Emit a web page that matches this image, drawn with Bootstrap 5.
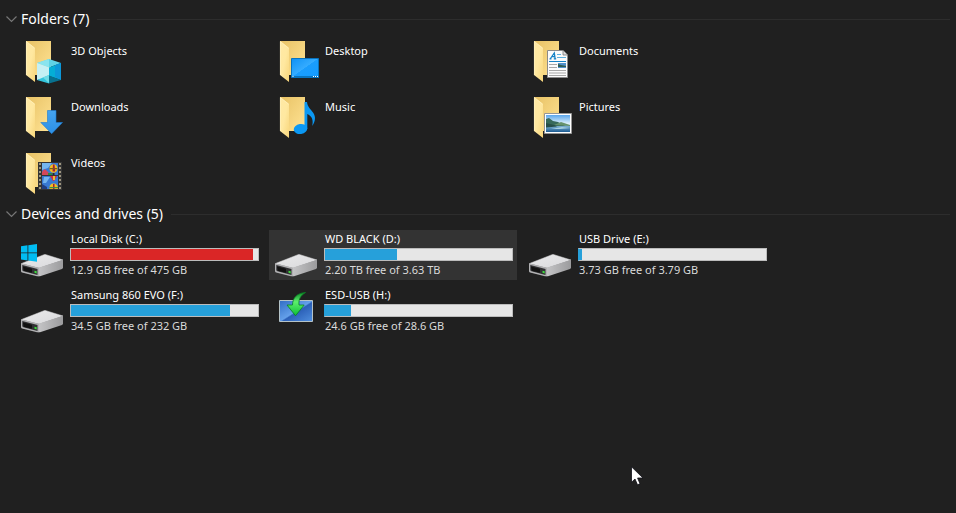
<!DOCTYPE html>
<html lang="en" data-bs-theme="dark">
<head>
<meta charset="utf-8">
<meta name="viewport" content="width=device-width, initial-scale=1">
<title>This PC</title>
<link href="https://cdn.jsdelivr.net/npm/bootstrap@5.3.0/dist/css/bootstrap.min.css" rel="stylesheet">
<style>
  body { background: #202020; color: #fff; font-family: "Noto Sans", "Open Sans", sans-serif; font-size: 11px; line-height: 18px; }
  .explorer { padding: 3px 6px 0; }
  .group-head { height: 32px; gap: 8px; }
  .group-toggle { gap: 4px; font-size: 14px; line-height: 20px; color: #fff; }
  .group-rule { height: 1px; background: #2d2d2d; }
  .tiles { display: grid; grid-template-columns: repeat(auto-fill, 248px); gap: 6px; padding: 0 0 1px 9px; max-width: 780px; }
  .tile { height: 50px; gap: 4px; padding: 1px 4px 0 3px; color: #fff; }
  .tile:hover, .tile.hovered { background: #333; }
  .tile-label { padding: 6px 0 0 1px; }
  .tile-text { padding-left: 1px; }
  .free { color: #dadada; }
  .meter { --bs-progress-height: 13px; --bs-progress-bg: #e6e6e6; --bs-progress-bar-bg: #26a0da; border: 1px solid #bcbcbc; }
  .meter.edge { border-left-color: #26a0da; }
  .meter.full { --bs-progress-bar-bg: #da2626; }
  .name { line-height: 15px; padding-bottom: 2px; }
  .pointer { left: 631px; top: 466px; }
</style>
</head>
<body>
<svg class="position-absolute" width="0" height="0" aria-hidden="true">
  <defs>
    <linearGradient id="gBack" x1="0" y1="0" x2="1" y2="1"><stop offset="0" stop-color="#e8c265"/><stop offset="1" stop-color="#ffe394"/></linearGradient>
    <linearGradient id="gFlap" x1="0" y1="0" x2="1" y2="1"><stop offset="0" stop-color="#ffe9a6"/><stop offset=".5" stop-color="#ffe8a0"/><stop offset="1" stop-color="#f8d67b"/></linearGradient>
    <linearGradient id="gScreen" x1="0" y1="0" x2="1" y2="1"><stop offset="0" stop-color="#0f91f5"/><stop offset=".49" stop-color="#35acff"/><stop offset=".5" stop-color="#1a9dfd"/><stop offset="1" stop-color="#149bff"/></linearGradient>
    <linearGradient id="gTop" x1="0" y1="0" x2="1" y2="1"><stop offset="0" stop-color="#eaeaeb"/><stop offset="1" stop-color="#d9d9dc"/></linearGradient>
    <linearGradient id="gSide" x1="0" y1="0" x2="1" y2="0"><stop offset="0" stop-color="#c4c4c6"/><stop offset="1" stop-color="#9b9b9d"/></linearGradient>
    <linearGradient id="gSky" x1="0" y1="0" x2="0" y2="1"><stop offset="0" stop-color="#5ba7ed"/><stop offset=".5" stop-color="#dceffb"/><stop offset="1" stop-color="#e9f5fb"/></linearGradient>
    <linearGradient id="gSea" x1="0" y1="0" x2="0" y2="1"><stop offset="0" stop-color="#8dbfdc"/><stop offset="1" stop-color="#1b5a91"/></linearGradient>
    <linearGradient id="gUsb" x1="0" y1="0" x2="1" y2="1"><stop offset="0" stop-color="#2f6cc4"/><stop offset=".5" stop-color="#64a0ea"/><stop offset=".54" stop-color="#2b60b8"/><stop offset="1" stop-color="#4f8ede"/></linearGradient>
    <linearGradient id="gGreen" x1="0" y1="0" x2="0" y2="1"><stop offset="0" stop-color="#0e8a27"/><stop offset=".4" stop-color="#5df06c"/><stop offset="1" stop-color="#0bbd36"/></linearGradient>
    <linearGradient id="gDown" x1="0" y1="0" x2="0" y2="1"><stop offset="0" stop-color="#45a3ee"/><stop offset="1" stop-color="#2c90e6"/></linearGradient>
  </defs>
  <symbol id="folder" viewBox="0 0 48 48">
    <path fill="url(#gBack)" d="M8 5h25v34H8z"/>
    <path fill="url(#gFlap)" d="M8 5l9 7v34L8 39z"/>
    <path fill="none" stroke="#fff2c2" stroke-width=".7" d="M8.400 5.500v33.500M8.400 5.500l8.300 6.700"/>
  </symbol>
  <symbol id="drive" viewBox="0 0 48 48">
    <path fill="url(#gTop)" stroke="#dedee0" stroke-width=".5" stroke-linejoin="round" d="M3.500 32.500L26 23.700q1-.5 2 0L45 29 21 37z"/>
    <path fill="url(#gSide)" d="M20.500 36.800L45 28.800V37l-1 1L22 45.300h-1.500z"/>
    <path fill="#b1b1b3" d="M3 32.200l18 4.600V45.300h-2L4 41.500q-1-.5-1-1.500z"/>
    <path fill="#303032" d="M4.300 34l15.200 4v6l-14-3.700q-1.200-.3-1.200-1.300z"/>
    <path fill="#111" d="M5 35.500l9 2.300v4L5.800 39.700z"/>
    <path fill="#3ddb3d" d="M16.500 39.700l2.200.6v2.100l-2.200-.6z"/>
  </symbol>
</svg>

<main class="explorer">
  <section>
    <h2 class="group-head d-flex align-items-center m-0">
      <button class="group-toggle btn fw-normal p-0 border-0 d-flex align-items-center" type="button" data-bs-toggle="collapse" data-bs-target="#folders" aria-expanded="true" aria-controls="folders">
        <svg width="11" height="8" viewBox="0 0 11 8" fill="none" stroke="#777" stroke-width="1.200" aria-hidden="true"><path d="M.5 1.500l5 5 5-5"/></svg>
        <span>Folders (7)</span>
      </button>
      <span class="group-rule flex-grow-1"></span>
    </h2>
    <div id="folders" class="collapse show">
      <div class="tiles">
        <a class="tile d-flex text-decoration-none" href="#objects">
          <svg class="flex-shrink-0" width="48" height="48" viewBox="0 0 48 48" aria-hidden="true"><use href="#folder"/>
            <path fill="#5fd3e6" d="M31 23l12 4-12 4.500-12-4.500z"/><path fill="#8ae4ee" d="M31 23v8.500l-12-4.500z"/>
            <path fill="#c6f0f4" d="M19 27l12 4.500v10L19 44z"/><path fill="#33c5dd" d="M19 44l12-5v8.500z"/>
            <path fill="#05aed6" d="M31 31.500l12-4.500v17l-12-4z"/><path fill="#0c97d8" d="M37 29.200l6-2.200v17l-6-3z"/><path fill="#08718f" d="M31 39.500l12 4.500-12 3.500z"/><path fill="#70dce6" d="M25 41.500l6-2.500v8z"/>
          </svg>
          <span class="tile-label">3D Objects</span>
        </a>
        <a class="tile d-flex text-decoration-none" href="#desktop">
          <svg class="flex-shrink-0" width="48" height="48" viewBox="0 0 48 48" aria-hidden="true"><use href="#folder"/>
            <path fill="url(#gScreen)" stroke="#0873be" d="M19.500 22.500h27v19h-27z"/><path fill="#0873be" d="M20 40h27v2H20z"/>
            <path fill="#fff" d="M20.500 40h1v1h-1zM41 40h1v1h-1zM43 40h1v1h-1zM45 40h1v1h-1z"/>
          </svg>
          <span class="tile-label">Desktop</span>
        </a>
        <a class="tile d-flex text-decoration-none" href="#documents">
          <svg class="flex-shrink-0" width="48" height="48" viewBox="0 0 48 48" aria-hidden="true"><use href="#folder"/>
            <path fill="#fbfbfb" stroke="#8a8a8a" d="M21.500 14.500h15.500l4.500 4.500v22.500h-20z"/><path fill="#ddd" stroke="#777" stroke-width=".8" d="M37 14.500V19h4.500"/>
            <path fill="none" stroke="#1682c6" stroke-width="1.300" d="M23.500 22.800h2M24.500 22.500l3.800-5.500.8 5.500M27.800 22.800h2.400M26 20.700h3"/>
            <path fill="#5fb1de" d="M31 18h4v1h-4zM31 21h9v1h-9z"/><path fill="#1682c6" d="M23 25h17v1H23z"/>
            <path fill="#a8a8a8" d="M23 28h8v1h-8zM23 31h8v1h-8zM23 34h17v1H23zM23 36.500h17v1H23zM23 39h17v1H23z"/>
            <path fill="#5191cc" d="M32 27h8v5h-8z"/><path fill="#315c50" d="M32 28l3 1 5 1v1h-8z"/>
          </svg>
          <span class="tile-label">Documents</span>
        </a>
        <a class="tile d-flex text-decoration-none" href="#downloads">
          <svg class="flex-shrink-0" width="48" height="48" viewBox="0 0 48 48" aria-hidden="true"><use href="#folder"/>
            <path fill="url(#gDown)" stroke="#1c7bd0" stroke-width=".6" d="M29.500 18.500h8.500v12h6.500L33.700 41.700 22.800 30.500h6.700z"/>
          </svg>
          <span class="tile-label">Downloads</span>
        </a>
        <a class="tile d-flex text-decoration-none" href="#music">
          <svg class="flex-shrink-0" width="48" height="48" viewBox="0 0 48 48" aria-hidden="true"><use href="#folder"/>
            <ellipse cx="28.500" cy="37" rx="6.800" ry="5" fill="#0b98f3" transform="rotate(-8 28.500 37)"/>
            <path fill="#0b98f3" d="M32.500 10H35c.5 5 3.500 7 6 10.500 3 4 2.500 9-.8 13.500 1.200-5 .5-9.500-4.900-12V37h-2.800z"/>
          </svg>
          <span class="tile-label">Music</span>
        </a>
        <a class="tile d-flex text-decoration-none" href="#pictures">
          <svg class="flex-shrink-0" width="48" height="48" viewBox="0 0 48 48" aria-hidden="true"><use href="#folder"/>
            <path fill="#fff" stroke="#969696" d="M18.500 21.500h27v20h-27z"/><path fill="url(#gSky)" d="M20 23h24v17H20z"/>
            <path fill="url(#gSea)" d="M20 33h24v7H20z"/><path fill="#37695b" d="M20 27l3-1 4 3 5 1 5 3 3 1H20z"/><path fill="#66926d" d="M28 33l7-3 9 3v1z"/><path fill="#274e48" d="M20 31l8 2 3 1.500-11 1z"/><path fill="#a8d2e4" d="M25 37l11-2 8 1-10 1z"/>
          </svg>
          <span class="tile-label">Pictures</span>
        </a>
        <a class="tile d-flex text-decoration-none" href="#videos">
          <svg class="flex-shrink-0" width="48" height="48" viewBox="0 0 48 48" aria-hidden="true"><use href="#folder"/>
            <path fill="#353535" d="M20 14h24v28H20z"/><path fill="#3879d2" d="M24 15h16v12H24zM24 28h16v13H24z"/>
            <path fill="none" stroke="#b9b094" stroke-width="1.600" stroke-dasharray="2 2" d="M22 15v26M42 15v26"/>
            <path fill="#75b5ee" d="M24 15h10l-4 5-6 2zM26 29h6l-4 6h-3z"/>
            <ellipse cx="35.500" cy="20.500" rx="4" ry="4.300" fill="#f2bd20"/><path fill="#a61e36" d="M35 16.500h1.500l.7 7h-2.700z"/><path fill="#7c5a1c" d="M31.600 20h7.800v1.200h-7.800z"/><path fill="#302b22" d="M34.500 25h2v2h-2z"/>
            <path fill="#d4475a" d="M24 24q2-4 4-2t3 3v2h-7z"/><path fill="#318942" d="M30 25h4v2h-4z"/>
            <path fill="#cc3049" d="M32 28h7l-3 5h-1z"/><path fill="#eebd2d" d="M35 28h2v4h-2z"/>
            <path fill="#f2bd20" d="M31.500 41q-.4-5.500 4-5.500t4.500 5.500z"/><path fill="#a61e36" d="M35 36h1.500v5H35z"/><path fill="#3c8c4c" d="M31.500 39h8.500v1.200h-8.500z"/><path fill="#213f82" d="M24 36l5 3v2h-5z"/>
          </svg>
          <span class="tile-label">Videos</span>
        </a>
      </div>
    </div>
  </section>

  <section>
    <h2 class="group-head d-flex align-items-center m-0">
      <button class="group-toggle btn fw-normal p-0 border-0 d-flex align-items-center" type="button" data-bs-toggle="collapse" data-bs-target="#drives" aria-expanded="true" aria-controls="drives">
        <svg width="11" height="8" viewBox="0 0 11 8" fill="none" stroke="#777" stroke-width="1.200" aria-hidden="true"><path d="M.5 1.500l5 5 5-5"/></svg>
        <span>Devices and drives (5)</span>
      </button>
      <span class="group-rule flex-grow-1"></span>
    </h2>
    <div id="drives" class="collapse show">
      <div class="tiles">
        <a class="tile d-flex text-decoration-none" href="#c">
          <svg class="flex-shrink-0" width="48" height="48" viewBox="0 0 48 48" aria-hidden="true"><use href="#drive"/>
            <path fill="#00bcf2" d="M3 15.200l6.500-.9v7.200H3zM10.300 14.200l8.700-1.200v8.500h-8.700zM3 22.300h6.500v7.200l-6.500-.9zM10.300 22.300H19v8.500l-8.700-1.200z"/>
          </svg>
          <span class="flex-grow-1">
            <span class="tile-text name d-block">Local Disk (C:)</span>
            <span class="meter full progress rounded-0" role="progressbar" aria-label="Local Disk (C:) used space" aria-valuenow="97" aria-valuemin="0" aria-valuemax="100"><span class="progress-bar" style="width:97.300%"></span></span>
            <span class="tile-text free d-block">12.9 GB free of 475 GB</span>
          </span>
        </a>
        <a class="tile hovered d-flex text-decoration-none" href="#d">
          <svg class="flex-shrink-0" width="48" height="48" viewBox="0 0 48 48" aria-hidden="true"><use href="#drive"/></svg>
          <span class="flex-grow-1">
            <span class="tile-text name d-block">WD BLACK (D:)</span>
            <span class="meter progress rounded-0" role="progressbar" aria-label="WD BLACK (D:) used space" aria-valuenow="39" aria-valuemin="0" aria-valuemax="100"><span class="progress-bar" style="width:38.500%"></span></span>
            <span class="tile-text free d-block">2.20 TB free of 3.63 TB</span>
          </span>
        </a>
        <a class="tile d-flex text-decoration-none" href="#e">
          <svg class="flex-shrink-0" width="48" height="48" viewBox="0 0 48 48" aria-hidden="true"><use href="#drive"/></svg>
          <span class="flex-grow-1">
            <span class="tile-text name d-block">USB Drive (E:)</span>
            <span class="meter edge progress rounded-0" role="progressbar" aria-label="USB Drive (E:) used space" aria-valuenow="2" aria-valuemin="0" aria-valuemax="100"><span class="progress-bar" style="width:1.600%"></span></span>
            <span class="tile-text free d-block">3.73 GB free of 3.79 GB</span>
          </span>
        </a>
        <a class="tile d-flex text-decoration-none" href="#f">
          <svg class="flex-shrink-0" width="48" height="48" viewBox="0 0 48 48" aria-hidden="true"><use href="#drive"/></svg>
          <span class="flex-grow-1">
            <span class="tile-text name d-block">Samsung 860 EVO (F:)</span>
            <span class="meter progress rounded-0" role="progressbar" aria-label="Samsung 860 EVO (F:) used space" aria-valuenow="85" aria-valuemin="0" aria-valuemax="100"><span class="progress-bar" style="width:85%"></span></span>
            <span class="tile-text free d-block">34.5 GB free of 232 GB</span>
          </span>
        </a>
        <a class="tile d-flex text-decoration-none" href="#h">
          <svg class="flex-shrink-0" width="48" height="48" viewBox="0 0 48 48" aria-hidden="true">
            <path fill="url(#gUsb)" stroke="#b5c3c8" d="M7.500 13.500h33v21h-33z"/>
            <path fill="url(#gGreen)" stroke="#0b7d24" stroke-width=".8" d="M33.500 5.500c-5 3-7 6.500-6.500 12.500h5.200L23.500 28.800 15 18h5.500C20.500 11 25 6 33.500 5.500z"/>
          </svg>
          <span class="flex-grow-1">
            <span class="tile-text name d-block">ESD-USB (H:)</span>
            <span class="meter edge progress rounded-0" role="progressbar" aria-label="ESD-USB (H:) used space" aria-valuenow="14" aria-valuemin="0" aria-valuemax="100"><span class="progress-bar" style="width:14%"></span></span>
            <span class="tile-text free d-block">24.6 GB free of 28.6 GB</span>
          </span>
        </a>
      </div>
    </div>
  </section>
</main>
<svg class="pointer position-absolute pe-none" width="13" height="20" viewBox="0 0 13 20" aria-hidden="true"><path fill="#fff" stroke="#101018" stroke-width=".8" d="M.5.8v15.500L4 13l2.500 5.800 2.500-1L6.600 12H12z"/></svg>
<script src="https://cdn.jsdelivr.net/npm/bootstrap@5.3.0/dist/js/bootstrap.bundle.min.js"></script>
</body>
</html>
